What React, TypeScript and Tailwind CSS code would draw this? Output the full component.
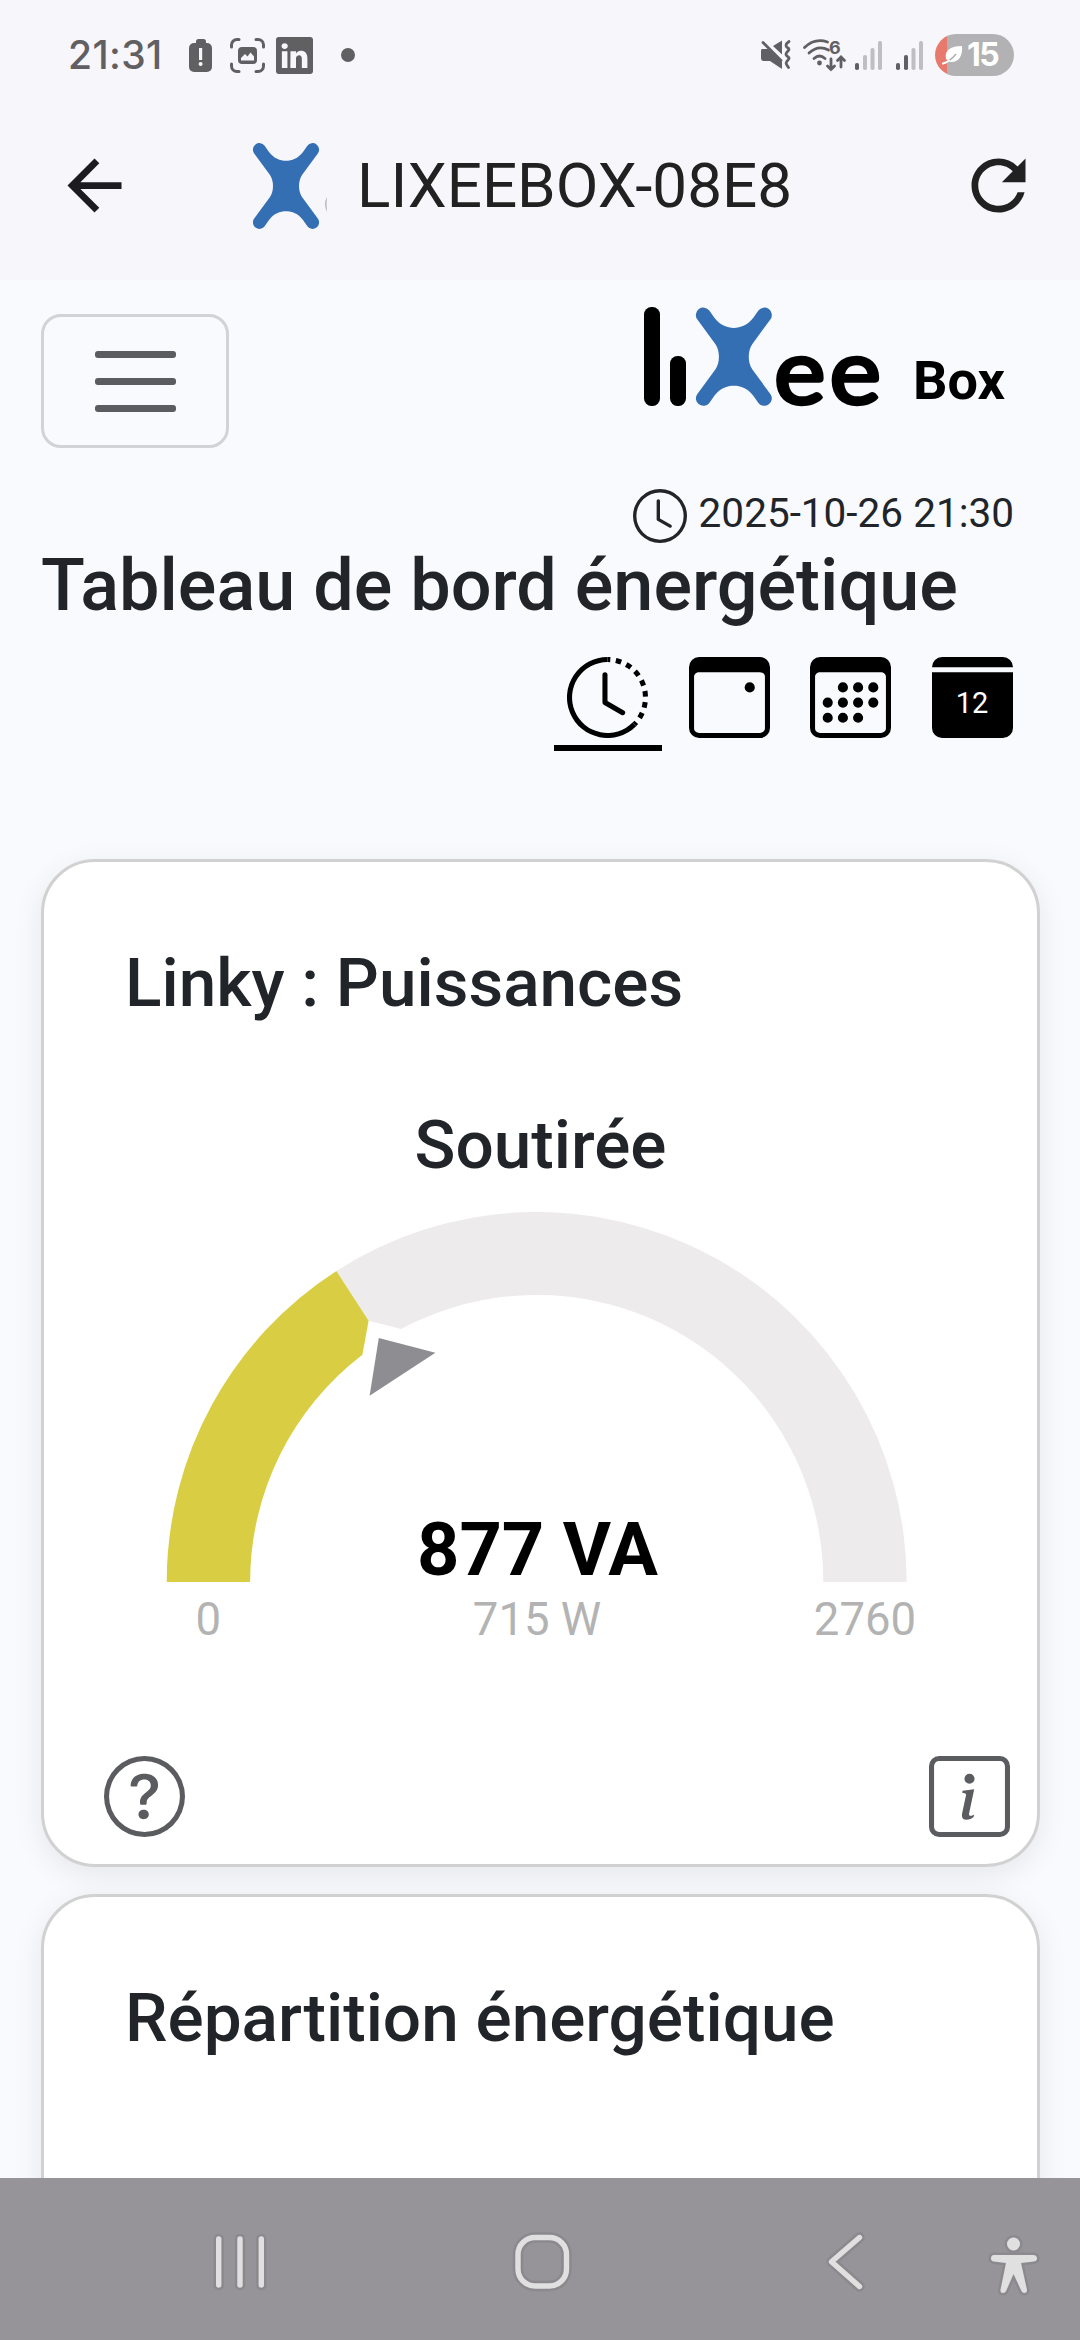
import type { ReactNode } from "react"
import { BsCalendar3, BsCalendar3Event, BsCalendar3Fill, BsClock, BsClockHistory, BsInfoSquare, BsLinkedin, BsQuestionCircle } from "react-icons/bs"
import { MdArrowBack, MdRefresh } from "react-icons/md"

const LIXEE_X =
  "M11.6 2.7 L16 9 C21 15.5 27 17.8 33 17.8 C39 17.8 45 15.5 50 9 L54.4 2.7 A6.5 6.5 0 0 1 64.8 10.5 L49 32 C45 38 45 48 49 54 L64.8 75.5 A6.5 6.5 0 0 1 54.4 83.3 L50 77 C45 70.5 39 68.3 33 68.3 C27 68.3 21 70.5 16 77 L11.6 83.3 A6.5 6.5 0 0 1 1.2 75.5 L17 54 C21 48 21 38 17 32 L1.2 10.5 A6.5 6.5 0 0 1 11.6 2.7 Z"

function Signal({ level, className }: { level: number; className: string }) {
  const bars = [
    { x: 0, y: 22 },
    { x: 8, y: 14 },
    { x: 15.5, y: 7 },
    { x: 23, y: 0 },
  ]
  return (
    <svg width="27" height="29" viewBox="0 0 27 29" className={className}>
      {bars.map((bar, index) => (
        <rect key={index} x={bar.x} y={bar.y} width="4" height={29 - bar.y} rx="1.8" fill={index < level ? "#606062" : "#bfbfc3"} />
      ))}
    </svg>
  )
}

function StatusBar() {
  return (
    <div className="flex h-[110px] shrink-0 items-center justify-between pl-[68px] pr-[66px] text-[#606062]">
      <div className="flex items-center">
        <span className="w-[121px] font-[Inter] text-[39px] font-medium tracking-[0.4px]">21:31</span>
        <svg width="23" height="33" viewBox="0 0 23 33" fill="currentColor">
          <rect x="7" y="0" width="10" height="8" rx="2.5" />
          <rect x="0" y="4" width="23" height="29" rx="5" />
          <rect x="10" y="9" width="3.2" height="12" fill="#f6f6fb" />
          <circle cx="11.6" cy="25" r="2" fill="#f6f6fb" />
        </svg>
        <svg width="35" height="35" viewBox="0 0 35 35" fill="none" stroke="currentColor" strokeWidth="3" strokeLinecap="round" className="ml-[18px]">
          <path d="M1.5 9 V7 A5.5 5.5 0 0 1 7 1.5 H9 M26 1.5 H28 A5.5 5.5 0 0 1 33.5 7 V9 M33.5 26 V28 A5.5 5.5 0 0 1 28 33.5 H26 M9 33.5 H7 A5.5 5.5 0 0 1 1.5 28 V26" />
          <rect x="8" y="9" width="19" height="17" rx="4" fill="currentColor" stroke="none" />
          <path d="M11 22.5 V20 L15 16 L17.5 18.5 L20.5 14.5 L24 18.5 V22.5 Z" fill="#f6f6fb" stroke="none" />
        </svg>
        <BsLinkedin className="ml-[11px] size-[37px]" />
        <span className="ml-7 size-[14px] rounded-full bg-[#606062]" />
      </div>
      <div className="flex items-center">
        <svg width="31" height="30" viewBox="0 0 31 30" className="mr-[11px]">
          <path d="M1 9 H7 L21 22 V29 L9 21 H3 Q0 21 0 18 V11 Q0 9 1 9 Z M12 6 L21 0.5 V14.5 Z" fill="currentColor" />
          <path d="M2 2.5 L20 20.5" stroke="currentColor" strokeWidth="2.8" strokeLinecap="round" />
          <path d="M28 1.5 C23 5 25.5 7 27 8 C30 10 24.5 12 25 14.5 C25.5 17 30 17 27 20 C24 23 25 24 27.5 27.5" fill="none" stroke="currentColor" strokeWidth="2.8" strokeLinecap="round" />
        </svg>
        <svg width="43" height="33" viewBox="0 0 43 33" fill="none" stroke="currentColor" strokeWidth="2.8" strokeLinecap="round" className="overflow-visible">
          <path d="M1.5 8.5 Q12 -1.5 24.5 3 M6 14 Q15 5.5 25.5 11 M11 19.5 Q16.5 14.5 22 19.5" />
          <circle cx="16.5" cy="24" r="2.4" fill="currentColor" stroke="none" />
          <path d="M28 20 V30.5 M24.5 27 L28 30.5 L31.5 27 M38 28 V18.5 M34.5 21.5 L38 18 L41.5 21.5" />
          <text x="26" y="15" fill="currentColor" stroke="none" fontFamily="Inter, sans-serif" fontWeight="700" fontSize="18">
            6
          </text>
        </svg>
        <Signal level={1} className="ml-[9px]" />
        <Signal level={2} className="ml-[14px]" />
        <div className="ml-3 flex h-[42px] w-[79px] items-center rounded-full bg-[linear-gradient(90deg,#e87a6d_12px,#b2b2b4_12px)] pl-[7px] text-white">
          <svg width="22" height="20" viewBox="0 0 22 20">
            <path d="M4 14 C2 5 9 1 20 1 C21 10 17 18 8 17 Z" fill="#fff" />
            <path d="M1 18 C6 17 10 14 14 9" fill="none" stroke="#b2b2b4" strokeWidth="1.6" />
            <path d="M1 18.5 C4 18 5 17 7 15.5" fill="none" stroke="#fff" strokeWidth="2" strokeLinecap="round" />
          </svg>
          <span className="ml-[3px] font-[Inter] text-[32px] font-bold leading-none tracking-[-1.5px]">15</span>
        </div>
      </div>
    </div>
  )
}

function AppBar() {
  return (
    <header className="flex h-[170px] shrink-0 items-center pb-[19px] pl-[54px] pr-[41px] text-[#212121]">
      <MdArrowBack className="size-[81px] text-[#1c1b1f]" />
      <svg width="82" height="86" viewBox="0 0 82 86" className="ml-[118px]">
        <path d={LIXEE_X} fill="#346eb3" />
        <path d="M74 54 Q70 61 74 69 Q73 61 74 54" fill="#b9b6b9" />
      </svg>
      <h1 className="ml-[22px] flex-1 text-[62px] leading-[80px]">LIXEEBOX-08E8</h1>
      <MdRefresh className="size-[81px]" />
    </header>
  )
}

function LixeeLogo() {
  return (
    <svg width="240" height="100" viewBox="0 0 240 100" className="-mt-[7px] overflow-visible">
      <rect x="0" y="0" width="16" height="99" rx="7.5" />
      <rect x="26" y="49" width="16" height="50" rx="7.5" />
      <path d={LIXEE_X} transform="translate(52 0.5) scale(1.147 1.145)" fill="#346eb3" />
      <g fontFamily="Lato, sans-serif" fontSize="92" stroke="#000" strokeWidth="3.600" strokeLinejoin="round">
        <text x="130" y="96.500" textLength="51.500" lengthAdjust="spacingAndGlyphs">
          e
        </text>
        <text x="185.500" y="96.500" textLength="51.500" lengthAdjust="spacingAndGlyphs">
          e
        </text>
      </g>
    </svg>
  )
}

function Card({ title, className, children }: { title: string; className: string; children?: ReactNode }) {
  return (
    <section className={`ml-[41px] w-[999px] shrink-0 rounded-[54px] border-[3px] border-[#d1d1d2] bg-white shadow-[0_8px_30px_rgba(0,0,0,0.08)] ${className}`}>
      <h3 className="pl-[81px] pt-[81px] text-[67.5px] font-medium leading-[80px]">{title}</h3>
      {children}
    </section>
  )
}

function Gauge() {
  return (
    <svg width="800" height="450" viewBox="140 1200 800 450" className="ml-[96px] mt-[15px]" fontFamily="Roboto, sans-serif" textAnchor="middle">
      <path d="M336.400 1271 A370 370 0 0 1 906.700 1582 H823.300 A286.600 286.600 0 0 0 401.200 1329 L368.600 1320.700 Z" fill="#edebec" />
      <path d="M166.700 1582 A370 370 0 0 1 336.400 1271 L368.600 1320.700 L362.400 1354.700 A286.600 286.600 0 0 0 250.100 1582 Z" fill="#d9ce43" />
      <path d="M378.800 1338 L435.400 1352.700 L369.600 1395.700 Z" fill="#8e8d92" />
      <text x="537.500" y="1575" fontSize="74" fontWeight="700">
        877 VA
      </text>
      <g fontSize="45.500" fill="#b3b3b3">
        <text x="208.400" y="1634.500">0</text>
        <text x="537" y="1634.500">715 W</text>
        <text x="865" y="1634.500">2760</text>
      </g>
    </svg>
  )
}

function NavBar() {
  return (
    <nav className="h-[162px] shrink-0 bg-[#969499]">
      <svg width="1080" height="162" viewBox="0 2178 1080 162" fill="none" strokeLinecap="round" strokeLinejoin="round">
        {/* darker halo first, then the light icon on top */}
        {[
          { color: "#8b898e", grow: 5 },
          { color: "#e0e0e0", grow: 0 },
        ].map(({ color, grow }) => (
          <g key={color} stroke={color} strokeWidth={5.4 + grow}>
            <path d="M218.700 2239 V2285 M240 2239 V2285 M261.300 2239 V2285" />
            <rect x="518" y="2237.500" width="48.500" height="48.500" rx="17" />
            <path d="M859.500 2237.500 L831.500 2261.700 L859.500 2286.500" />
            <circle cx="1013.500" cy="2244" r="6.500" fill={color} stroke={color} strokeWidth={grow || 0.1} />
            <path
              d="M994 2255 H1033 Q1037 2255 1037 2258.500 Q1037 2261 1033.500 2261.500 L1021 2263 L1027 2290 Q1027 2293 1024 2293 Q1022 2293 1021 2290 L1013.500 2274 L1006.500 2290 Q1005.500 2293 1003 2293 Q1000 2293 1000.500 2290 L1006 2263 L994 2261.500 Q991 2261 991 2258.500 Q991 2255 994 2255 Z"
              fill={color}
              stroke={color}
              strokeWidth={grow || 0.1}
            />
          </g>
        ))}
      </svg>
    </nav>
  )
}

export default function App() {
  return (
    <div className="flex h-[2340px] w-[1080px] flex-col overflow-hidden bg-[#f6f6fb] font-[Roboto,sans-serif] text-[#212529]">
      <StatusBar />
      <AppBar />

      <main className="flex min-h-0 flex-1 flex-col overflow-hidden bg-[#f8fafe] pt-[34px]">
        <div className="flex h-[134px] shrink-0 items-start justify-between pl-[41px] pr-[73px]">
          <button className="flex h-[134px] w-[188px] flex-col items-center justify-center gap-5 rounded-[20px] border-[3px] border-[#d2d3d6]">
            <span className="h-[7px] w-[81px] rounded-[3px] bg-[#5b5c60]" />
            <span className="h-[7px] w-[81px] rounded-[3px] bg-[#5b5c60]" />
            <span className="h-[7px] w-[81px] rounded-[3px] bg-[#5b5c60]" />
          </button>
          <div className="flex items-start text-black">
            <LixeeLogo />
            <span className="ml-[29px] mt-[37px] w-[94px] text-[54px] font-bold leading-[60px]">Box</span>
          </div>
        </div>

        <div className="mt-[35px] flex h-[60px] shrink-0 justify-end pr-[66px]">
          <BsClock className="mr-3 mt-[6px] size-[54px]" />
          <span className="text-[40.5px] leading-[60px]">2025-10-26 21:30</span>
        </div>

        <h2 className="mt-[3px] shrink-0 whitespace-nowrap pl-[41px] text-[72px] font-medium leading-[80px]">Tableau de bord énergétique</h2>

        <div className="mt-[31px] flex h-[94px] shrink-0 justify-end gap-[13.5px] pr-[54px] text-black">
          <div className="border-b-[6px] border-black px-[13.5px]">
            <BsClockHistory className="size-[81px]" />
          </div>
          <div className="px-[13.5px]">
            <BsCalendar3Event className="size-[81px]" />
          </div>
          <div className="px-[13.5px]">
            <BsCalendar3 className="size-[81px]" />
          </div>
          <div className="relative px-[13.5px]">
            <BsCalendar3Fill className="size-[81px]" />
            <span className="absolute inset-x-0 top-[26px] text-center text-[29px] leading-[40px] text-white">12</span>
          </div>
        </div>

        <Card title="Linky : Puissances" className="mt-[108px] h-[1008px]">
          <h4 className="mt-[82px] text-center text-[67.5px] font-medium leading-[80px]">Soutirée</h4>
          <Gauge />
          <div className="mt-[106px] flex justify-between pl-[60px] pr-[27px] text-[#5b5c60]">
            <BsQuestionCircle className="size-[81px]" />
            <BsInfoSquare className="size-[81px]" />
          </div>
        </Card>

        <Card title="Répartition énergétique" className="mt-[27px] h-[1008px]" />
      </main>

      <NavBar />
    </div>
  )
}
